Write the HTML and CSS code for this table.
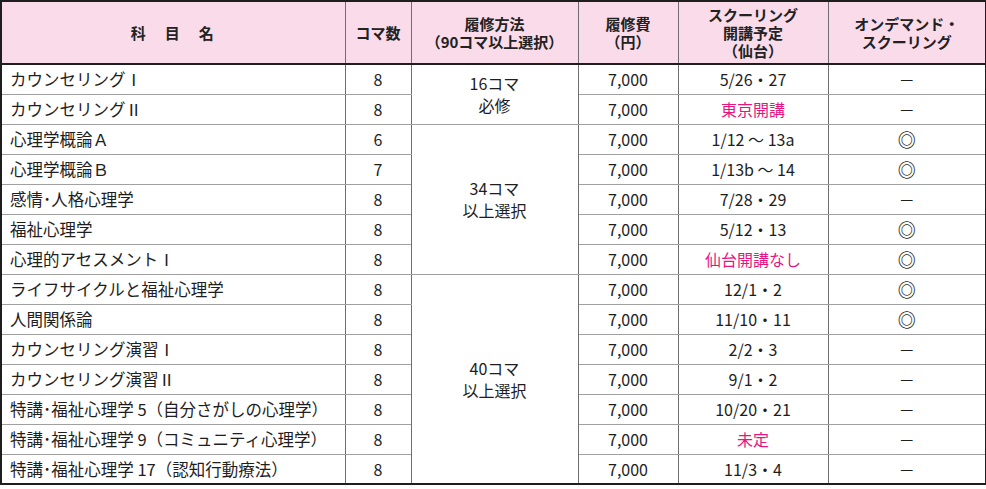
FILE: index.html
```html
<!DOCTYPE html>
<html lang="ja">
<head>
<meta charset="utf-8">
<link rel="stylesheet" href="styles.css">
</head>
<body>
<table class="tbl">
  <colgroup>
    <col class="c-name">
    <col class="c-koma">
    <col class="c-method">
    <col class="c-fee">
    <col class="c-date">
    <col class="c-od">
  </colgroup>
  <thead>
    <tr class="head">
      <th class="h-name">科　目　名</th>
      <th class="lt">コマ数</th>
      <th>履修方法<br>（90コマ以上選択）</th>
      <th>履修費<br>（円）</th>
      <th>スクーリング<br>開講予定<br>（仙台）</th>
      <th class="lt">オンデマンド・<br>スクーリング</th>
    </tr>
  </thead>
  <tbody>
    <tr>
      <td class="name">カウンセリングⅠ</td><td class="num lt">8</td>
      <td class="method" rowspan="2">16コマ<br>必修</td>
      <td class="num">7,000</td><td class="num">5/26・27</td><td class="num lt">－</td>
    </tr>
    <tr>
      <td class="name">カウンセリングⅡ</td><td class="num lt">8</td>
      <td class="num">7,000</td><td class="num pink">東京開講</td><td class="num lt">－</td>
    </tr>
    <tr>
      <td class="name">心理学概論Ａ</td><td class="num lt">6</td>
      <td class="method" rowspan="5">34コマ<br>以上選択</td>
      <td class="num">7,000</td><td class="num">1/12 ～ 13a</td><td class="num lt mark">◎</td>
    </tr>
    <tr>
      <td class="name">心理学概論Ｂ</td><td class="num lt">7</td>
      <td class="num">7,000</td><td class="num">1/13b ～ 14</td><td class="num lt mark">◎</td>
    </tr>
    <tr>
      <td class="name">感情･人格心理学</td><td class="num lt">8</td>
      <td class="num">7,000</td><td class="num">7/28・29</td><td class="num lt">－</td>
    </tr>
    <tr>
      <td class="name">福祉心理学</td><td class="num lt">8</td>
      <td class="num">7,000</td><td class="num">5/12・13</td><td class="num lt mark">◎</td>
    </tr>
    <tr>
      <td class="name">心理的アセスメントⅠ</td><td class="num lt">8</td>
      <td class="num">7,000</td><td class="num pink">仙台開講なし</td><td class="num lt mark">◎</td>
    </tr>
    <tr>
      <td class="name">ライフサイクルと福祉心理学</td><td class="num lt">8</td>
      <td class="method" rowspan="7">40コマ<br>以上選択</td>
      <td class="num">7,000</td><td class="num">12/1・2</td><td class="num lt mark">◎</td>
    </tr>
    <tr>
      <td class="name">人間関係論</td><td class="num lt">8</td>
      <td class="num">7,000</td><td class="num">11/10・11</td><td class="num lt mark">◎</td>
    </tr>
    <tr>
      <td class="name">カウンセリング演習Ⅰ</td><td class="num lt">8</td>
      <td class="num">7,000</td><td class="num">2/2・3</td><td class="num lt">－</td>
    </tr>
    <tr>
      <td class="name">カウンセリング演習Ⅱ</td><td class="num lt">8</td>
      <td class="num">7,000</td><td class="num">9/1・2</td><td class="num lt">－</td>
    </tr>
    <tr>
      <td class="name">特講･福祉心理学 5（自分さがしの心理学）</td><td class="num lt">8</td>
      <td class="num">7,000</td><td class="num">10/20・21</td><td class="num lt">－</td>
    </tr>
    <tr>
      <td class="name">特講･福祉心理学 9（コミュニティ心理学）</td><td class="num lt">8</td>
      <td class="num">7,000</td><td class="num pink">未定</td><td class="num lt">－</td>
    </tr>
    <tr>
      <td class="name">特講･福祉心理学 17（認知行動療法）</td><td class="num lt">8</td>
      <td class="num">7,000</td><td class="num">11/3・4</td><td class="num lt">－</td>
    </tr>
  </tbody>
</table>
</body>
</html>
```

FILE: styles.css
```css
html, body {
  margin: 0;
  padding: 0;
  background: #ffffff;
}

body {
  font-family: "Noto Sans CJK JP", "Noto Sans", sans-serif;
  color: #1e1e1e;
}

.tbl {
  width: 985px;
  border-collapse: collapse;
  table-layout: fixed;
  border: 2px solid #1e1e1e;
  font-size: 16px;
}

.c-name { width: 344px; }
.c-koma { width: 66px; }
.c-method { width: 167px; }
.c-fee { width: 100px; }
.c-date { width: 150px; }
.c-od { width: 158px; }

th, td {
  border-left: 1px solid #6e6e6e;
  border-right: 1px solid #6e6e6e;
  border-top: 1px solid #a0a0a0;
  border-bottom: 1px solid #a0a0a0;
  padding: 0;
}

.lt {
  border-left-color: #a8a8a8;
}

.head th {
  background: #fadbe9;
  height: 61px;
  font-size: 15px;
  font-weight: 700;
  line-height: 18px;
  border-bottom: 2px solid #1e1e1e;
  text-align: center;
  vertical-align: middle;
  color: #222;
}

.head .h-name {
  letter-spacing: 2px;
}

tbody tr {
  height: 30px;
}

td {
  vertical-align: middle;
  line-height: 18px;
}

.name {
  text-align: left;
  padding-left: 8px;
  white-space: nowrap;
  font-size: 16.5px;
}

.num {
  text-align: center;
}

.mark {
  font-size: 18px;
  font-weight: 700;
}

.method {
  text-align: center;
  line-height: 22px;
}

.pink {
  color: #e6157f;
}
```
